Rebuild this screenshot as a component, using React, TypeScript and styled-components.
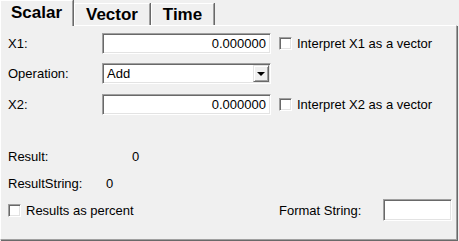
import styled, { createGlobalStyle } from 'styled-components';

const GlobalStyle = createGlobalStyle`
  body {
    margin: 0;
    background: #f0f0f0;
    font-family: 'Liberation Sans', Arial, sans-serif;
  }
`;

const Window = styled.div`
  width: 459px;
  height: 241px;
  background: #f0f0f0;
  display: flex;
  flex-direction: column;
  color: #000;
  font-size: 13px;
`;

const TabBar = styled.div`
  height: 25px;
  display: flex;
  align-items: flex-end;
`;

const Tab = styled.div<{ $active?: boolean; $width: number }>`
  box-sizing: border-box;
  width: ${(p) => p.$width}px;
  height: ${(p) => (p.$active ? 26 : 22)}px;
  margin-bottom: ${(p) => (p.$active ? -1 : 0)}px;
  margin-left: ${(p) => (p.$active ? 0 : 1)}px;
  position: relative;
  z-index: ${(p) => (p.$active ? 1 : 0)};
  background: #f0f0f0;
  border-top: 1px solid #fff;
  border-left: 1px solid #fff;
  border-right: 1px solid #a0a0a0;
  box-shadow: 1px 0 0 #696969;
  display: flex;
  align-items: center;
  justify-content: center;
  padding-bottom: ${(p) => (p.$active ? 2 : 0)}px;
  font-size: 17px;
  font-weight: bold;
`;

const Panel = styled.div`
  box-sizing: border-box;
  width: 457px;
  height: 215px;
  border-top: 1px solid #fff;
  border-left: 1px solid #fff;
  border-right: 1px solid #a0a0a0;
  border-bottom: 1px solid #a0a0a0;
  box-shadow: 1px 1px 0 #696969;
  padding: 7px 4px 0 7px;
  display: flex;
  flex-direction: column;
`;

const InputRow = styled.div<{ $top: number }>`
  display: grid;
  grid-template-columns: 94px 169px auto;
  align-items: center;
  height: 21px;
  margin-top: ${(p) => p.$top}px;
`;

const Label = styled.span`
  white-space: nowrap;
`;

const Field = styled.input<{ $align?: string }>`
  box-sizing: border-box;
  width: 100%;
  height: 100%;
  margin: 0;
  padding: 0 4px 0 2px;
  background: #fff;
  border-style: solid;
  border-width: 1px;
  border-color: #a0a0a0 #fff #fff #a0a0a0;
  box-shadow: inset 1px 1px 0 #696969, inset -1px -1px 0 #e3e3e3;
  font: 13px 'Liberation Sans', Arial, sans-serif;
  color: #000;
  text-align: ${(p) => p.$align || 'left'};
  outline: none;
`;

const Combo = styled.div`
  box-sizing: border-box;
  height: 21px;
  display: flex;
  align-items: center;
  background: #fff;
  border-style: solid;
  border-width: 1px;
  border-color: #a0a0a0 #fff #fff #a0a0a0;
  box-shadow: inset 1px 1px 0 #696969, inset -1px -1px 0 #e3e3e3;
  padding: 1px 1px 1px 1px;
`;

const ComboText = styled.span`
  flex: 1;
  padding-left: 3px;
`;

const DropButton = styled.div`
  box-sizing: border-box;
  width: 16px;
  height: 17px;
  background: #f0f0f0;
  border-style: solid;
  border-width: 1px;
  border-color: #e3e3e3 #696969 #696969 #e3e3e3;
  box-shadow: inset 1px 1px 0 #fff, inset -1px -1px 0 #a0a0a0;
  display: flex;
  align-items: center;
  justify-content: center;
`;

const Arrow = styled.div`
  width: 0;
  height: 0;
  border-left: 4px solid transparent;
  border-right: 4px solid transparent;
  border-top: 4px solid #000;
`;

const CheckLabel = styled.label<{ $indent?: number }>`
  display: flex;
  align-items: center;
  gap: 5px;
  margin-left: ${(p) => p.$indent ?? 0}px;
  white-space: nowrap;
`;

const Box = styled.span`
  box-sizing: border-box;
  width: 13px;
  height: 13px;
  background: #fff;
  border-style: solid;
  border-width: 1px;
  border-color: #a0a0a0 #fff #fff #a0a0a0;
  box-shadow: inset 1px 1px 0 #696969, inset -1px -1px 0 #e3e3e3;
`;

const ResultRow = styled.div<{ $labelWidth: number; $top: number }>`
  display: grid;
  grid-template-columns: ${(p) => p.$labelWidth}px auto;
  align-items: center;
  height: 21px;
  margin-top: ${(p) => p.$top}px;
`;

const BottomRow = styled.div`
  display: grid;
  grid-template-columns: 271px 104px 69px;
  align-items: center;
  height: 22px;
  margin-top: 5px;
`;

export default function App() {
  return (
    <Window>
      <GlobalStyle />
      <TabBar>
        <Tab $active $width={73}>Scalar</Tab>
        <Tab $width={76}>Vector</Tab>
        <Tab $width={63}>Time</Tab>
      </TabBar>
      <Panel>
        <InputRow $top={0}>
          <Label>X1:</Label>
          <Field $align="right" value="0.000000" readOnly />
          <CheckLabel $indent={8}>
            <Box />
            Interpret X1 as a vector
          </CheckLabel>
        </InputRow>
        <InputRow $top={9}>
          <Label>Operation:</Label>
          <Combo>
            <ComboText>Add</ComboText>
            <DropButton>
              <Arrow />
            </DropButton>
          </Combo>
        </InputRow>
        <InputRow $top={10}>
          <Label>X2:</Label>
          <Field $align="right" value="0.000000" readOnly />
          <CheckLabel $indent={8}>
            <Box />
            Interpret X2 as a vector
          </CheckLabel>
        </InputRow>
        <ResultRow $labelWidth={124} $top={31}>
          <Label>Result:</Label>
          <span>0</span>
        </ResultRow>
        <ResultRow $labelWidth={98} $top={6}>
          <Label>ResultString:</Label>
          <span>0</span>
        </ResultRow>
        <BottomRow>
          <CheckLabel>
            <Box />
            Results as percent
          </CheckLabel>
          <Label>Format String:</Label>
          <Field value="" readOnly />
        </BottomRow>
      </Panel>
    </Window>
  );
}
